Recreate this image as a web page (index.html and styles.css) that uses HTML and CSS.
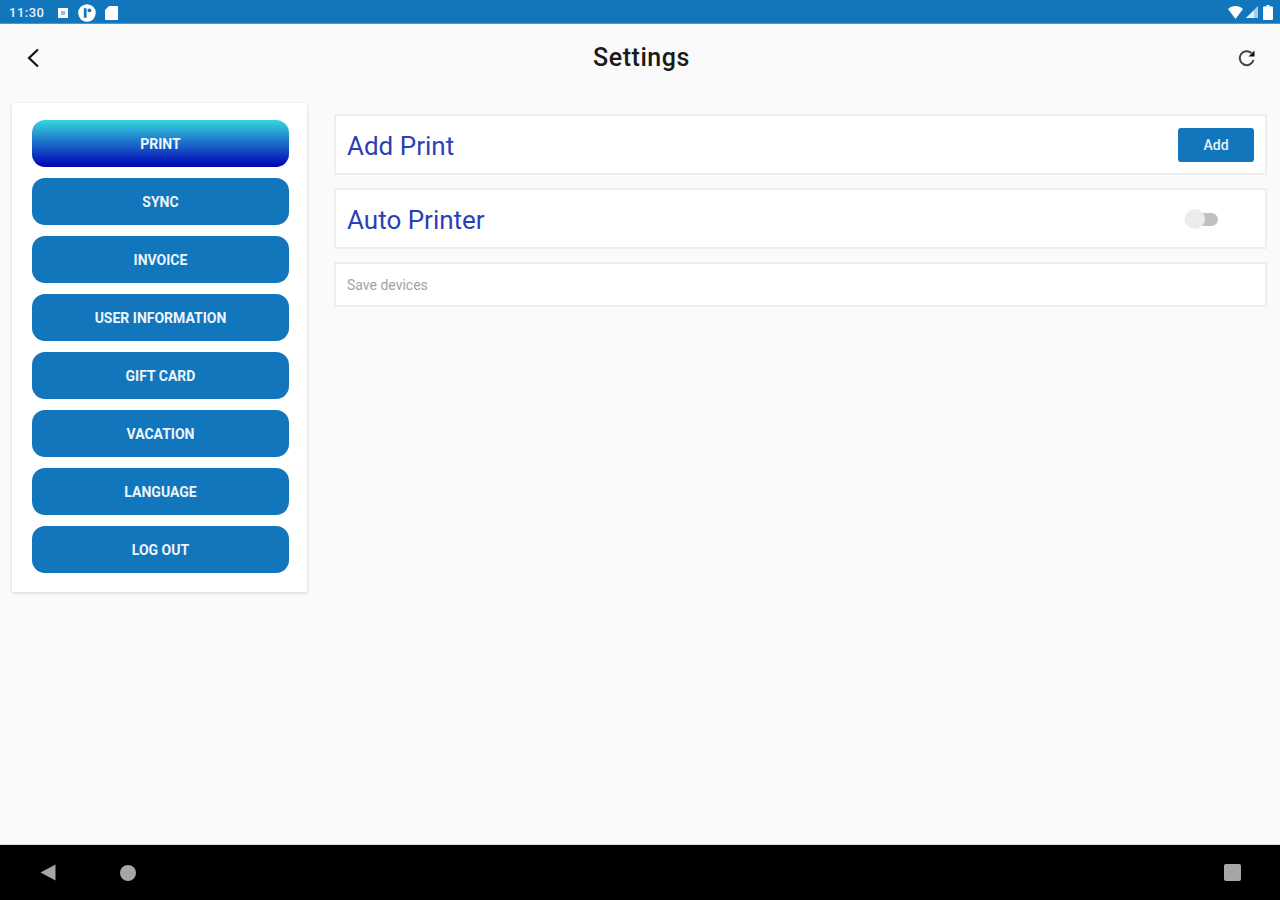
FILE: index.html
```html
<!DOCTYPE html>
<html>
<head>
    <title>Settings</title>
    <link rel="stylesheet" href="styles.css">
</head>
<body>
    <div class="status-bar">
        <div class="status-left">
            <span class="clock">11:30</span>
            <svg class="status-icon" width="12" height="12" viewBox="0 0 12 12">
                <path fill="#fff" fill-rule="evenodd" d="M1 1h10v10H1zM4 4v4h4V4z"/>
                <rect x="4" y="4" width="4" height="4" fill="#8fbfe0"/>
            </svg>
            <svg class="status-icon" width="18" height="18" viewBox="0 0 17 17">
                <circle cx="8.500" cy="8.500" r="8.300" fill="#fff"/>
                <rect x="5.500" y="4" width="2.600" height="9" fill="#1176bc"/>
                <circle cx="10.800" cy="6" r="1.800" fill="#1176bc"/>
            </svg>
            <svg class="status-icon" width="13" height="14" viewBox="0 0 13 14">
                <path fill="#fff" d="M4 0h8a1 1 0 0 1 1 1v12a1 1 0 0 1-1 1H1a1 1 0 0 1-1-1V4z"/>
            </svg>
        </div>
        <div class="status-right">
            <svg class="wifi-icon" width="15" height="13" viewBox="0 0 15 13"><path fill="#fff" d="M0 3C4-.9 11-.9 15 3L7.500 13z"/></svg>
            <svg class="signal-icon" width="12" height="12" viewBox="0 0 12 12">
                <path fill="#a9cde6" d="M12 0v12H0z"/>
                <path fill="#e4f0f8" d="M8 4.500v7.500H0z"/>
            </svg>
            <svg width="10" height="15" viewBox="0 0 10 15"><path fill="#fff" d="M3.500 0h3v1.500H9a1 1 0 0 1 1 1V14a1 1 0 0 1-1 1H1a1 1 0 0 1-1-1V2.500a1 1 0 0 1 1-1h2.500z"/></svg>
        </div>
    </div>

    <div class="header">
        <svg class="back-icon" width="14" height="22" viewBox="0 0 14 22">
            <path d="M12 2.500L3 11l9 8.500" fill="none" stroke="#111" stroke-width="2.200"/>
        </svg>
        <h1>Settings</h1>
        <svg class="refresh-icon" width="20" height="20" viewBox="0 0 20 20">
            <path d="M16.500 12a7 7 0 1 1-2-7" fill="none" stroke="#444" stroke-width="2"/>
            <path d="M17.500 2.500v6h-6z" fill="#111"/>
        </svg>
    </div>

    <div class="content">
        <div class="sidebar">
            <button class="menu-btn active">PRINT</button>
            <button class="menu-btn">SYNC</button>
            <button class="menu-btn">INVOICE</button>
            <button class="menu-btn">USER INFORMATION</button>
            <button class="menu-btn">GIFT CARD</button>
            <button class="menu-btn">VACATION</button>
            <button class="menu-btn">LANGUAGE</button>
            <button class="menu-btn">LOG OUT</button>
        </div>

        <div class="main">
            <div class="row">
                <span class="row-title">Add Print</span>
                <button class="add-btn">Add</button>
            </div>
            <div class="row">
                <span class="row-title">Auto Printer</span>
                <div class="toggle"><div class="toggle-thumb"></div></div>
            </div>
            <div class="row row-small">
                <span class="row-hint">Save devices</span>
            </div>
        </div>
    </div>

    <div class="nav-bar">
        <svg width="16" height="17" viewBox="0 0 16 17"><path fill="#a6a6a6" d="M0.500 8.500L15.500 0.500v16z"/></svg>
        <div class="nav-circle"></div>
        <div class="nav-square"></div>
    </div>
</body>
</html>
```

FILE: styles.css
```css
body {
    font-family: Roboto, "Liberation Sans", sans-serif;
    margin: 0;
    height: 900px;
    overflow: hidden;
    display: flex;
    flex-direction: column;
    background-color: #fafafa;
}
.status-bar {
    height: 23px;
    flex-shrink: 0;
    background-color: #1176bc;
    border-bottom: 1px solid #4d97cf;
    display: flex;
    justify-content: space-between;
    align-items: center;
    padding: 0 7px 0 9px;
}
.status-left {
    display: flex;
    align-items: center;
    padding-top: 2px;
}
.clock {
    color: #e8f2f9;
    font-size: 13px;
    font-weight: 500;
    letter-spacing: 0.5px;
    width: 48px;
}
.status-icon {
    margin-right: 9px;
}
.status-right {
    display: flex;
    align-items: center;
    padding-top: 1px;
    gap: 3px;
}
.signal-icon {
    margin-right: 2px;
}
.header {
    height: 67px;
    flex-shrink: 0;
    padding: 0 23px 12px 26px;
    display: grid;
    grid-template-columns: 1fr auto 1fr;
    align-items: center;
}
.header h1 {
    margin: 0;
    font-size: 25px;
    font-weight: 500;
    color: #1a1a1a;
    letter-spacing: 0.55px;
}
.refresh-icon {
    justify-self: end;
}
.content {
    flex: 1;
    display: flex;
    align-items: flex-start;
    padding-left: 12px;
}
.sidebar {
    width: 295px;
    box-sizing: border-box;
    background-color: #fff;
    padding: 17px 18px 19px 20px;
    display: flex;
    flex-direction: column;
    gap: 11px;
    box-shadow: 0 1px 3px rgba(0, 0, 0, 0.16);
}
.menu-btn {
    height: 47px;
    border: none;
    border-radius: 13px;
    background-color: #1176bc;
    color: #eef5fa;
    font-family: Roboto, "Liberation Sans", sans-serif;
    font-size: 14px;
    font-weight: 700;
    padding: 0;
}
.menu-btn.active {
    background: linear-gradient(to bottom, #36d6de, #0000b4);
}
.main {
    flex: 1;
    padding: 11px 13px 0 27px;
    display: flex;
    flex-direction: column;
    gap: 13px;
}
.row {
    height: 61px;
    box-sizing: border-box;
    background-color: #fff;
    border: 2px solid #eeeeee;
    display: flex;
    align-items: center;
    justify-content: space-between;
    padding: 0 11px;
}
.row-small {
    height: 45px;
}
.row-title {
    color: #2d3fb4;
    font-size: 26px;
    margin-top: 2px;
}
.row-hint {
    color: #a3a3a3;
    font-size: 14px;
}
.add-btn {
    width: 76px;
    height: 34px;
    border: none;
    border-radius: 3px;
    background-color: #1176bc;
    color: #e8f2f9;
    font-family: Roboto, "Liberation Sans", sans-serif;
    font-size: 14px;
    font-weight: 500;
    padding: 0;
}
.toggle {
    width: 33px;
    height: 13px;
    margin: 2px 36px 0 0;
    border-radius: 7px;
    background-color: #c0c0c0;
    position: relative;
}
.toggle-thumb {
    position: absolute;
    left: 0;
    top: -4px;
    width: 20px;
    height: 20px;
    border-radius: 50%;
    background-color: #ececec;
}
.nav-bar {
    height: 56px;
    flex-shrink: 0;
    background-color: #000;
    border-top: 1px solid #ddd;
    box-sizing: border-box;
    display: flex;
    align-items: center;
    padding: 0 39px 0 40px;
}
.nav-circle {
    width: 16px;
    height: 16px;
    margin-left: 64px;
    border-radius: 50%;
    background-color: #a6a6a6;
}
.nav-square {
    width: 17px;
    height: 17px;
    margin-left: auto;
    border-radius: 2px;
    background-color: #a6a6a6;
}
```
